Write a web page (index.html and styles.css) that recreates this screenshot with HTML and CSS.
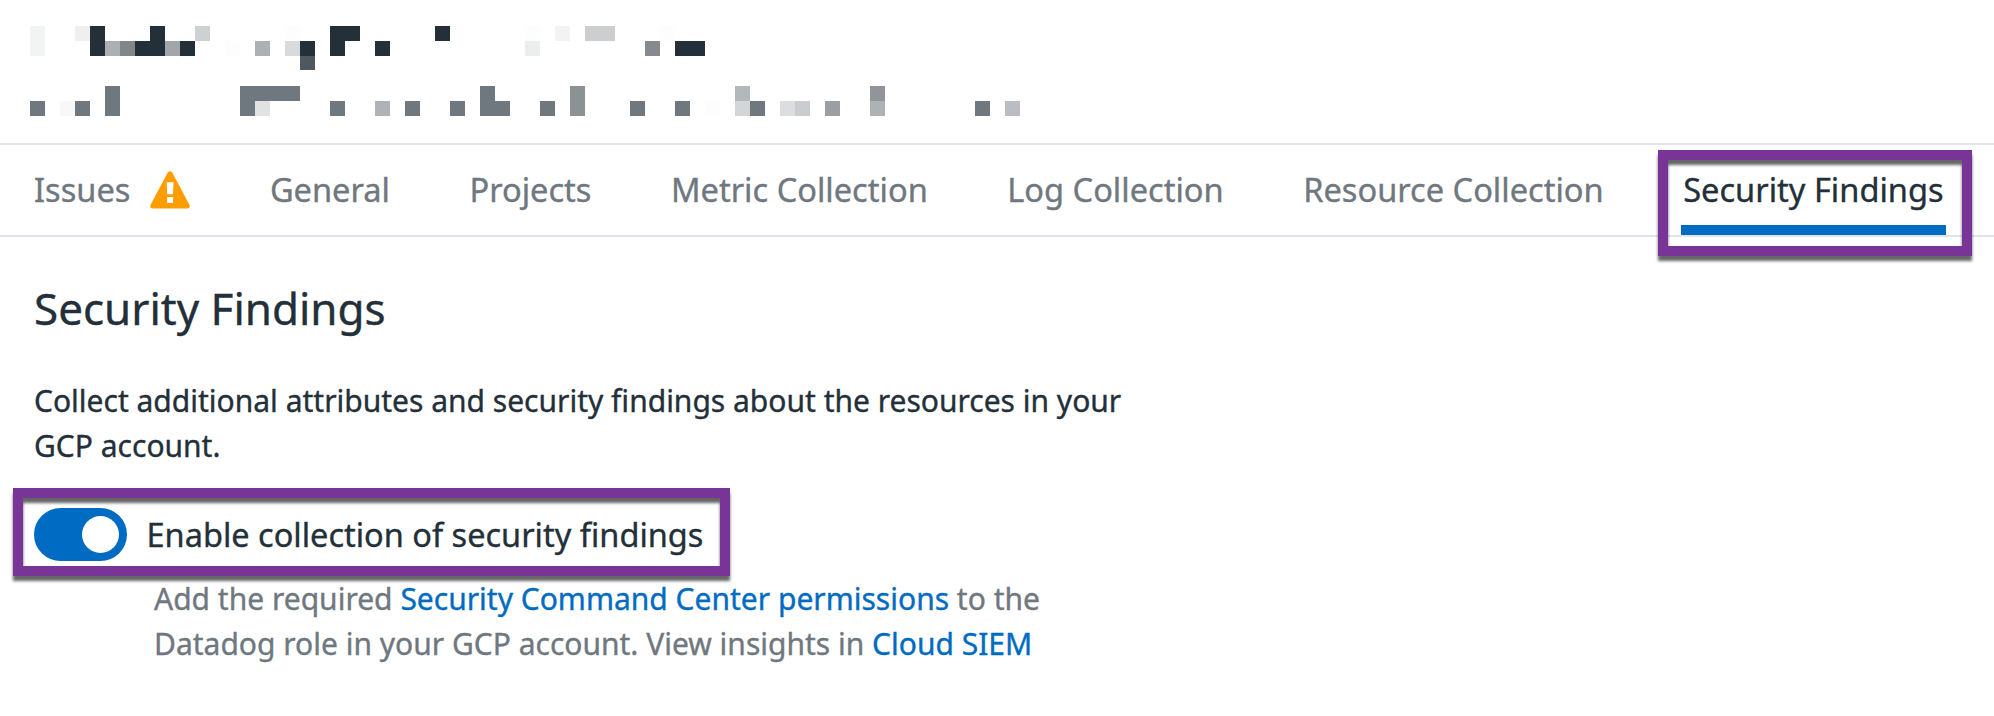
FILE: index.html
```html
<!DOCTYPE html>
<html lang="en">
<head>
<meta charset="utf-8">
<title>Security Findings</title>
<link rel="stylesheet" href="styles.css">
</head>
<body>
<header class="account">
  <svg class="redacted" width="1000" height="90" viewBox="0 0 1000 90" shape-rendering="crispEdges" aria-hidden="true">
    <g fill="#232f39">
      <path d="M60 0h15v30h-15zM120 0h15v30h-30v-15h15zM150 15h15v15h-15zM270 15h15v15h-15zM300 0h30v15h-15v15h-15zM345 15h15v15h-15zM405 0h15v15h-15zM645 15h30v15h-30z"/>
    </g>
    <path fill="#f2f4f4" d="M0 0h15v30h-15zM525 0h15v15h-15z"/>
    <path fill="#efefef" d="M45 0h15v15h-15z"/>
    <path fill="#adb0b2" d="M75 15h15v15h-15z"/>
    <path fill="#808787" d="M90 15h15v15h-15z"/>
    <path fill="#a2a5aa" d="M135 15h15v15h-15z"/>
    <path fill="#cdd1d2" d="M165 0h15v15h-15z"/>
    <path fill="#fdfdfd" d="M195 15h15v15h-15zM255 0h15v15h-15zM495 0h15v15h-15zM630 0h15v15h-15zM675 75h15v15h-15z"/>
    <path fill="#acb1b3" d="M225 15h15v15h-15z"/>
    <path fill="#d9dadb" d="M255 15h15v15h-15z"/>
    <path fill="#4f575f" d="M270 30h15v14h-15z"/>
    <path fill="#ebedee" d="M495 15h15v15h-15z"/>
    <path fill="#cdced0" d="M555 0h30v15h-30z"/>
    <path fill="#868a8e" d="M615 15h15v15h-15z"/>
    <path fill="#6f777f" d="M0 75h15v15h-15zM45 75h15v15h-15zM75 60h15v30h-15zM210 60h60v15h-45v15h-15zM300 75h15v15h-15zM375 75h15v15h-15zM420 75h15v15h-15zM450 60h15v15h15v15h-30zM510 75h15v15h-15zM600 75h15v15h-15zM645 75h15v15h-15zM720 75h15v15h-15zM945 75h15v15h-15z"/>
    <path fill="#f8f8f8" d="M30 75h15v15h-15z"/>
    <path fill="#e1e2e4" d="M225 75h15v15h-15z"/>
    <path fill="#afb2b6" d="M345 75h15v15h-15z"/>
    <path fill="#8b9294" d="M540 60h15v30h-15z"/>
    <path fill="#b3b8bb" d="M705 60h15v15h-15z"/>
    <path fill="#d4d5d7" d="M705 75h15v15h-15z"/>
    <path fill="#dcdddf" d="M750 75h15v15h-15z"/>
    <path fill="#c9cdcf" d="M765 75h15v15h-15z"/>
    <path fill="#9a9fa3" d="M795 75h15v15h-15z"/>
    <path fill="#919599" d="M840 60h15v15h-15z"/>
    <path fill="#adb3b5" d="M840 75h15v15h-15z"/>
    <path fill="#babdc1" d="M975 75h15v15h-15z"/>
  </svg>
</header>
<nav class="tabs">
  <a class="tab">Issues
    <svg class="warning" width="40" height="38" viewBox="0 0 40 38" aria-hidden="true">
      <path fill="#fc9d03" d="M17.6 1.7Q20-1.2 22.4 1.7L39.5 34Q40.6 37.5 37.5 37.5H2.5Q-.6 37.5 .5 34Z"/>
      <path fill="#fff" d="M16.7 11.3h6.8l-.5 11.9h-5.8zM17.1 26h6v6h-6z"/>
    </svg>
  </a>
  <a class="tab">General</a>
  <a class="tab">Projects</a>
  <a class="tab">Metric Collection</a>
  <a class="tab">Log Collection</a>
  <a class="tab">Resource Collection</a>
  <a class="tab tab-active">Security Findings<span class="callout callout-tab"></span></a>
</nav>
<main class="panel">
  <h1 class="title">Security Findings</h1>
  <p class="intro">Collect additional attributes and security findings about the resources in your<br>GCP account.</p>
  <div class="setting">
    <span class="toggle"><span class="knob"></span></span>
    <span class="setting-label">Enable collection of security findings</span>
    <span class="callout callout-setting"></span>
  </div>
  <p class="help">Add the required <a class="link">Security Command Center permissions</a> to the<br>Datadog role in your GCP account. View insights in <a class="link">Cloud SIEM</a></p>
</main>
</body>
</html>
```
FILE: styles.css
```css
* {
  box-sizing: border-box;
}

body {
  margin: 0;
  background: #fff;
  color: #232f39;
  font-family: "Noto Sans", sans-serif;
  -webkit-text-stroke: 0.35px currentColor;
  overflow: hidden;
}

.account {
  height: 145px;
  padding: 26px 30px 0;
  border-bottom: 2px solid #e1e4ef;
}

.redacted {
  display: block;
}

.tabs {
  display: flex;
  gap: 75.5px;
  height: 92px;
  padding-left: 32px;
  border-bottom: 2px solid #e1e4ef;
}

.tab {
  position: relative;
  display: flex;
  align-items: center;
  gap: 20px;
  height: 90px;
  padding: 10px 2px 0;
  border-bottom: 10px solid transparent;
  color: #6f777f;
  font-size: 32.6px;
  line-height: 44px;
  white-space: nowrap;
}

.tab-active {
  border-bottom-color: #006bc2;
  color: #232f39;
}

.callout {
  position: absolute;
  border: 10px solid #783497;
  filter: drop-shadow(0 5px 1.5px rgba(0, 0, 0, 0.6));
}

.callout-tab {
  top: 5px;
  left: -23px;
  width: 314px;
  height: 106px;
}

.panel {
  padding: 41px 34px 0;
}

.title {
  margin: 0 0 40px;
  font-size: 44px;
  font-weight: 400;
  line-height: 60px;
}

.intro {
  margin: 0 0 40px;
  font-size: 30px;
  line-height: 45px;
}

.setting {
  position: relative;
  display: flex;
  align-items: center;
  gap: 19.5px;
  height: 53px;
}

.toggle {
  display: flex;
  align-items: center;
  justify-content: flex-end;
  width: 93px;
  height: 53px;
  padding-right: 8px;
  border-radius: 27px;
  background: #006bc2;
}

.knob {
  width: 37px;
  height: 37px;
  border-radius: 50%;
  background: #fff;
}

.setting-label {
  font-size: 32.5px;
  line-height: 44px;
}

.callout-setting {
  top: -20px;
  left: -21px;
  width: 717px;
  height: 88px;
}

.help {
  margin: 15px 0 0 120px;
  color: #6f777f;
  font-size: 30px;
  line-height: 45px;
}

.link {
  color: #006bc2;
}
```
